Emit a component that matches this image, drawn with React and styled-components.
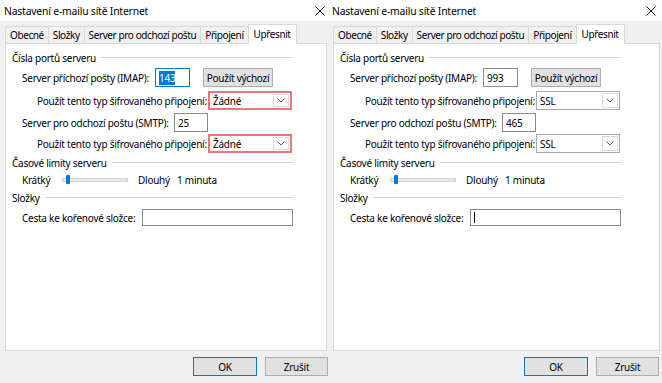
import React from 'react'
import styled, { createGlobalStyle } from 'styled-components'

const GlobalStyle = createGlobalStyle`
  html, body {
    margin: 0;
    padding: 0;
    background: #f0f0f0;
  }
  body {
    font-family: "Noto Sans", "Segoe UI", sans-serif;
  }
`

const Screen = styled.div`
  display: flex;
  width: 662px;
  height: 383px;
  overflow: hidden;
`

const Window = styled.div`
  flex: none;
  width: 331px;
  height: 383px;
  display: flex;
  flex-direction: column;
  background: #f0f0f0;
  color: #000;
  font-size: 10px;
  letter-spacing: -0.25px;
`

const TitleBar = styled.div`
  flex: none;
  height: 21px;
  box-sizing: border-box;
  display: flex;
  align-items: center;
  justify-content: space-between;
  padding: 0 6px 0 ${p => p.$pad}px;
  background: #fff;
  font-size: 10.4px;
  letter-spacing: -0.2px;
`

const Body = styled.div`
  display: flex;
  flex-direction: column;
  padding: 0 ${p => p.$right}px 0 ${p => p.$left}px;
`

const TabStrip = styled.div`
  height: 22px;
  display: flex;
  align-items: flex-end;
  padding-left: 1px;
  position: relative;
  z-index: 1;
`

const Tab = styled.div`
  box-sizing: border-box;
  height: ${p => (p.$active ? 20 : 17)}px;
  margin-left: -1px;
  margin-bottom: ${p => (p.$active ? -1 : 0)}px;
  padding: 0 ${p => (p.$active ? 5 : 4)}px;
  display: flex;
  align-items: center;
  border: 1px solid #d9d9d9;
  border-bottom: ${p => (p.$active ? '1px solid #fff' : 'none')};
  background: ${p => (p.$active ? '#fff' : '#f0f0f0')};
  letter-spacing: -0.4px;
  white-space: nowrap;
`

const Panel = styled.div`
  box-sizing: border-box;
  height: 308px;
  background: #fff;
  border: 1px solid #d9d9d9;
  padding: 6px 0 0 6px;
  display: flex;
  flex-direction: column;
  gap: 2px;
`

const GroupHead = styled.div`
  width: 281px;
  height: 15px;
  display: flex;
  align-items: center;
  white-space: nowrap;

  &::after {
    content: '';
    flex: 1;
    height: 1px;
    margin-left: 5px;
    background: #d2d2d2;
  }
`

const Field = styled.div`
  height: ${p => p.$h}px;
  display: flex;
  align-items: center;
  padding-left: ${p => p.$indent}px;
  white-space: nowrap;
`

const Label = styled.span`
  flex: none;
  width: ${p => p.$w}px;
`

const TextBox = styled.div`
  flex: none;
  box-sizing: border-box;
  width: ${p => p.$w}px;
  height: ${p => p.$h || 19}px;
  display: flex;
  align-items: center;
  padding-left: 3px;
  border: 1px solid ${p => (p.$focus ? '#0078d7' : '#8a8a8a')};
  background: #fff;
`

const Selected = styled.span`
  background: #0078d7;
  color: #fff;
`

const Caret = styled.span`
  width: 1px;
  height: 11px;
  background: #000;
`

const Button = styled.div`
  flex: none;
  box-sizing: border-box;
  width: ${p => p.$w}px;
  height: 19px;
  margin-left: ${p => p.$gap || 0}px;
  display: flex;
  align-items: center;
  justify-content: center;
  background: #e1e1e1;
  border: 1px solid ${p => (p.$default ? '#0078d7' : '#adadad')};
  white-space: nowrap;
`

const Combo = styled.div`
  flex: none;
  box-sizing: border-box;
  width: 84px;
  height: 19px;
  display: flex;
  align-items: center;
  justify-content: space-between;
  padding: 1px 1px 1px 3px;
  border: ${p => (p.$error ? '2px solid #e8777c' : '1px solid #a8a8a8')};
  background: #fff;
`

const ArrowBox = styled.div`
  box-sizing: border-box;
  width: 16px;
  height: 100%;
  display: flex;
  align-items: center;
  justify-content: center;
  border: 1px solid #dcdcdc;
`

const Track = styled.div`
  flex: none;
  box-sizing: border-box;
  width: 66px;
  height: 4px;
  margin-right: 10px;
  position: relative;
  background: #e7eaea;
  border: 1px solid #d6d6d6;
`

const Thumb = styled.div`
  position: absolute;
  left: 3px;
  top: -4px;
  width: 4px;
  height: 9px;
  background: #0078d7;
  border-radius: 1px;
`

const Footer = styled.div`
  display: flex;
  justify-content: flex-end;
  gap: 8px;
  padding: 6px 3px 0 0;
`

const Close = () => (
  <svg width="10" height="10" viewBox="0 0 10 10">
    <path d="M0.5 0.5 L9.5 9.5 M9.5 0.5 L0.5 9.5" stroke="#111" strokeWidth="1" fill="none" />
  </svg>
)

const Chevron = () => (
  <svg width="8" height="5" viewBox="0 0 8 5">
    <path d="M0.5 0.5 L4 4 L7.5 0.5" stroke="#606060" strokeWidth="1" fill="none" />
  </svg>
)

const tabs = ['Obecné', 'Složky', 'Server pro odchozí poštu', 'Připojení', 'Upřesnit']

const SettingsWindow = ({ imap, smtp, encryption, error, focusImap, caret, left, right }) => (
  <Window>
    <TitleBar $pad={left - 1}>
      <span>Nastavení e-mailu sítě Internet</span>
      <Close />
    </TitleBar>
    <Body $left={left} $right={right}>
      <TabStrip>
        {tabs.map((t, i) => (
          <Tab key={t} $active={i === tabs.length - 1}>{t}</Tab>
        ))}
      </TabStrip>
      <Panel>
        <GroupHead>Čísla portů serveru</GroupHead>
        <Field $h={21} $indent={10}>
          <Label $w={133}>Server příchozí pošty (IMAP):</Label>
          <TextBox $w={35} $focus={focusImap}>
            {focusImap ? <Selected>{imap}</Selected> : imap}
          </TextBox>
          <Button $w={70} $gap={13}>Použít výchozí</Button>
        </Field>
        <Field $h={21} $indent={25}>
          <Label $w={171}>Použít tento typ šifrovaného připojení:</Label>
          <Combo $error={error}>
            <span>{encryption}</span>
            <ArrowBox><Chevron /></ArrowBox>
          </Combo>
        </Field>
        <Field $h={19} $indent={10}>
          <Label $w={152}>Server pro odchozí poštu (SMTP):</Label>
          <TextBox $w={34}>{smtp}</TextBox>
        </Field>
        <Field $h={19} $indent={25}>
          <Label $w={171}>Použít tento typ šifrovaného připojení:</Label>
          <Combo $error={error}>
            <span>{encryption}</span>
            <ArrowBox><Chevron /></ArrowBox>
          </Combo>
        </Field>
        <GroupHead>Časové limity serveru</GroupHead>
        <Field $h={16} $indent={10}>
          <Label $w={40}>Krátký</Label>
          <Track><Thumb /></Track>
          <Label $w={39}>Dlouhý</Label>
          <span>1 minuta</span>
        </Field>
        <GroupHead>Složky</GroupHead>
        <Field $h={21} $indent={10}>
          <Label $w={120}>Cesta ke kořenové složce:</Label>
          <TextBox $w={151} $h={17}>{caret && <Caret />}</TextBox>
        </Field>
      </Panel>
    </Body>
    <Footer>
      <Button $w={64} $default>OK</Button>
      <Button $w={63}>Zrušit</Button>
    </Footer>
  </Window>
)

export default function App() {
  return (
    <>
      <GlobalStyle />
      <Screen>
        <SettingsWindow imap="143" smtp="25" encryption="Žádné" error focusImap left={5} right={4} />
        <SettingsWindow imap="993" smtp="465" encryption="SSL" caret left={2} right={2} />
      </Screen>
    </>
  )
}
